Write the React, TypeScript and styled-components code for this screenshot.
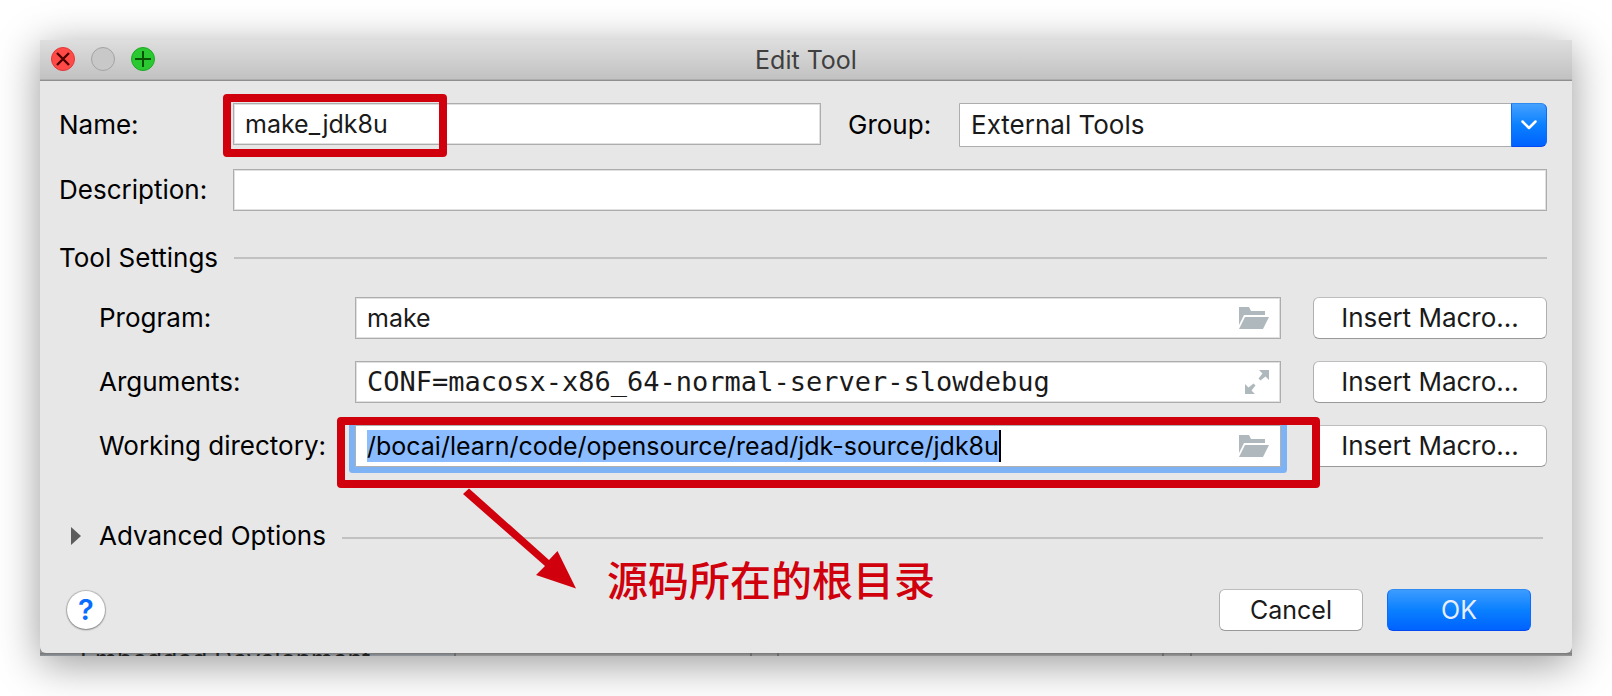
import React from 'react';
import styled, { createGlobalStyle, css } from 'styled-components';

const GlobalStyle = createGlobalStyle`
  *, *::before, *::after { box-sizing: border-box; }
  body {
    margin: 0;
    background: #fff;
    overflow: hidden;
    font-family: Inter, "Noto Sans CJK SC", sans-serif;
    font-size: 26px;
    line-height: 32px;
    color: #000;
  }
  button, input, select { font: inherit; color: inherit; margin: 0; }
`;

const Stage = styled.div`
  padding: 40px;
`;

const Frame = styled.div`
  background: #8f8f8f;
  box-shadow: 0 8px 40px rgba(0, 0, 0, 0.4);
`;

const Dialog = styled.form`
  background: #e7e7e7;
  border-radius: 0 0 6px 6px;
`;

const TitleBar = styled.header`
  display: grid;
  grid-template-columns: 1fr auto 1fr;
  align-items: center;
  height: 41px;
  padding: 0 11px;
  background: linear-gradient(#dedede, #c1c1c1);
  border-bottom: 1px solid #8f8f8f;
  box-shadow: inset 0 -1px 0 #adadad;
  color: #3f3f3f;
`;

const Title = styled.h1`
  margin: 0;
  font-size: 25px;
  font-weight: 400;
`;

const Lights = styled.div`
  display: flex;
  gap: 16px;
  padding-bottom: 2px;
`;

const Light = styled.button<{ $fill: string; $edge: string }>`
  display: grid;
  place-items: center;
  width: 24px;
  height: 24px;
  padding: 0;
  border: 1px solid ${(p) => p.$edge};
  border-radius: 50%;
  background: ${(p) => p.$fill};
`;

const Body = styled.div`
  padding: 22px 25px 22px 19px;
`;

const TopGrid = styled.div`
  display: grid;
  grid-template-columns: 174px minmax(0, 588fr) 138px minmax(0, 588fr);
  row-gap: 22px;
  align-items: start;
`;

const Label = styled.label<{ $indent?: boolean }>`
  align-self: center;
  padding-left: ${(p) => (p.$indent ? 27 : 0)}px;
  white-space: nowrap;
`;

const Field = styled.div<{ $focused?: boolean; $wide?: boolean }>`
  position: relative;
  display: flex;
  align-items: center;
  height: 42px;
  padding: 0 11px;
  border: 1px solid #adadad;
  background: #fff;
  box-shadow: inset 0 0 0 1px #e0e0e0;
  color: #1a1a1a;
  font-size: 25px;
  ${(p) => p.$wide && 'grid-column: 2 / -1;'}
  ${(p) =>
    p.$focused &&
    css`
      box-shadow: 0 0 0 6px #7db3f5;
      border-color: #b0b0b0;
      border-radius: 1px;
    `}
`;

const TextInput = styled.input<{ $mono?: boolean }>`
  flex: 1;
  min-width: 0;
  height: 32px;
  padding: 0;
  border: 0;
  outline: 0;
  background: transparent;
  ${(p) => p.$mono && 'font-family: "DejaVu Sans Mono", monospace; font-size: 27px;'}
`;

const PathSlot = styled.div`
  display: flex;
  flex: 1;
  min-width: 0;
`;

const SelectedInput = styled.input`
  field-sizing: content;
  height: 32px;
  padding: 0;
  border: 0;
  border-right: 2px solid #000;
  outline: 0;
  background: #8abcff;
  color: #000;
`;

const Combo = styled.div`
  position: relative;
  height: 44px;
`;

const Select = styled.select`
  appearance: none;
  width: 100%;
  height: 44px;
  padding: 0 48px 0 11px;
  border: 1px solid #adadad;
  border-radius: 0 6px 6px 0;
  background: #fff;
  color: #1a1a1a;
`;

const ComboArrow = styled.span`
  position: absolute;
  inset: 0 0 0 auto;
  display: grid;
  place-items: center;
  width: 36px;
  border: 1px solid;
  border-color: #2f8bf0 #0a6cff #0448f0;
  border-radius: 0 6px 6px 0;
  background: linear-gradient(#45a1ff, #0a80ff 50%, #0062ff);
  pointer-events: none;
`;

const Section = styled.div<{ $advanced?: boolean }>`
  display: flex;
  align-items: center;
  gap: 16px;
  margin-top: ${(p) => (p.$advanced ? 53 : 31)}px;
  padding-right: ${(p) => (p.$advanced ? 4 : 0)}px;
`;

const Heading = styled.h2`
  margin: 0;
  font-size: 26px;
  font-weight: 400;
  white-space: nowrap;
`;

const Rule = styled.hr<{ $low?: boolean }>`
  flex: 1;
  height: 2px;
  margin: ${(p) => (p.$low ? 4 : 0)}px 0 0;
  border: 0;
  background: #c1c1c1;
`;

const Disclosure = styled.button`
  display: flex;
  align-items: center;
  gap: 18px;
  padding: 0 0 0 12px;
  border: 0;
  background: none;
  line-height: 32px;
  white-space: nowrap;
`;

const Settings = styled.div`
  display: grid;
  grid-template-columns: 283px minmax(0, 1fr) 234px;
  row-gap: 22px;
  margin-top: 23px;
  padding-left: 13px;
`;

const FieldCell = styled.div`
  position: relative;
  margin-right: 32px;
`;

const Button = styled.button<{ $primary?: boolean; $dialog?: boolean }>`
  width: ${(p) => (p.$dialog ? '144px' : 'auto')};
  height: 42px;
  padding: 0;
  border: 1px solid;
  border-radius: 6px;
  font-size: ${(p) => (p.$dialog ? 25 : 26)}px;
  white-space: nowrap;
  ${(p) =>
    p.$primary
      ? css`
          border-color: #2f8bf0 #0a6cff #0448f0;
          background: linear-gradient(#3d9cff, #0a80ff 50%, #0062ff);
          color: #e8eefc;
        `
      : css`
          border-color: #bdbdbd #b0b0b0 #999;
          background: #fff;
          color: #1a1a1a;
        `}
`;

const Footer = styled.footer`
  display: flex;
  align-items: center;
  gap: 24px;
  margin-top: 37px;
  padding: 0 16px 0 8px;
`;

const Help = styled.button`
  width: 38px;
  height: 38px;
  margin-right: auto;
  padding: 0;
  border: 0;
  border-radius: 50%;
  background: #fff;
  box-shadow: 0 0 1px 1px rgba(0, 0, 0, 0.2), 0 1px 2px rgba(0, 0, 0, 0.3);
  color: #0a6cff;
  font-size: 29px;
  font-weight: 600;
`;

const Outline = styled.span<{ $inset: string }>`
  position: absolute;
  z-index: 2;
  inset: ${(p) => p.$inset};
  border: 8px solid #d0000d;
  border-radius: 4px;
  pointer-events: none;
`;

const NameOutline = styled(Outline)`
  width: 224px;
`;

const Note = styled.div`
  position: absolute;
  z-index: 2;
  top: 62px;
  left: 106px;
  display: flex;
  align-items: flex-start;
  gap: 30px;
  color: #d0000d;
  white-space: nowrap;
  pointer-events: none;
`;

const NoteText = styled.span`
  padding-top: 63px;
  font-family: "Noto Sans CJK SC", sans-serif;
  font-size: 41px;
  font-weight: 500;
  line-height: 56px;
`;

const Behind = styled.div`
  display: flex;
  height: 3px;
  overflow: hidden;
`;

const Pane = styled.div<{ $share: number; $tone?: string }>`
  flex: ${(p) => p.$share} 0 0;
  min-width: 0;
  border-right: 2px solid #6a6a6a;
  background: linear-gradient(#777, ${(p) => p.$tone ?? '#999'});
  color: #222;
  white-space: nowrap;

  &:last-child { border-right: 0; }
`;

const PaneText = styled.div`
  margin-top: -10px;
  padding-left: 40px;
  font-size: 25px;
`;

const FolderIcon = () => (
  <svg width="30" height="22" viewBox="0 0 30 22" fill="#afb9bd" aria-hidden="true">
    <path d="M0 0h10l2 4h14v4H5L0 18z" />
    <path d="M6 10h24l-6 12H0z" />
  </svg>
);

const ExpandIcon = () => (
  <svg width="24" height="24" viewBox="0 0 24 24" fill="#afb9bd" aria-hidden="true">
    <path d="M14 0h10v10l-3.500-3.500-5 4-2-2 4-5z" />
    <path d="M0 14l3.500 3.500 5-4 2 2-4 5L10 24H0z" />
  </svg>
);

export default function App() {
  return (
    <>
      <GlobalStyle />
      <Stage>
        <Frame>
          <Dialog onSubmit={(e) => e.preventDefault()}>
            <TitleBar>
              <Lights>
                <Light type="button" aria-label="Close" $fill="#ff4a48" $edge="#e0383a">
                  <svg width="14" height="14" viewBox="0 0 14 14" stroke="#4d0000" strokeWidth="2.400">
                    <path d="M1 1l12 12M13 1L1 13" />
                  </svg>
                </Light>
                <Light type="button" aria-label="Minimize" disabled $fill="#c8c8c8" $edge="#a3a3a3" />
                <Light type="button" aria-label="Zoom" $fill="#2bc931" $edge="#1fa825">
                  <svg width="16" height="16" viewBox="0 0 16 16" stroke="#0a5200" strokeWidth="2">
                    <path d="M8 0v16M0 8h16" />
                  </svg>
                </Light>
              </Lights>
              <Title>Edit Tool</Title>
            </TitleBar>

            <Body>
              <TopGrid>
                <Label htmlFor="name">Name:</Label>
                <Field>
                  <TextInput id="name" defaultValue="make_jdk8u" />
                  <NameOutline $inset="-10px auto -13px -11px" />
                </Field>
                <Label htmlFor="group" $indent>Group:</Label>
                <Combo>
                  <Select id="group" defaultValue="External Tools">
                    <option>External Tools</option>
                  </Select>
                  <ComboArrow>
                    <svg width="16" height="10" viewBox="0 0 16 10" fill="none" stroke="#fff" strokeWidth="2.500" strokeLinecap="round" strokeLinejoin="round">
                      <path d="M1.500 1.500L8 8l6.500-6.500" />
                    </svg>
                  </ComboArrow>
                </Combo>
                <Label htmlFor="description">Description:</Label>
                <Field $wide>
                  <TextInput id="description" />
                </Field>
              </TopGrid>

              <Section>
                <Heading>Tool Settings</Heading>
                <Rule />
              </Section>

              <Settings>
                <Label htmlFor="program" $indent>Program:</Label>
                <FieldCell>
                  <Field>
                    <TextInput id="program" defaultValue="make" />
                    <FolderIcon />
                  </Field>
                </FieldCell>
                <Button type="button">Insert Macro...</Button>

                <Label htmlFor="arguments" $indent>Arguments:</Label>
                <FieldCell>
                  <Field>
                    <TextInput id="arguments" $mono defaultValue="CONF=macosx-x86_64-normal-server-slowdebug" />
                    <ExpandIcon />
                  </Field>
                </FieldCell>
                <Button type="button">Insert Macro...</Button>

                <Label htmlFor="directory" $indent>Working directory:</Label>
                <FieldCell>
                  <Field $focused>
                    <PathSlot>
                      <SelectedInput id="directory" defaultValue="/bocai/learn/code/opensource/read/jdk-source/jdk8u" />
                    </PathSlot>
                    <FolderIcon />
                  </Field>
                  <Outline $inset="-8px -39px -21px -18px" />
                  <Note>
                    <svg width="116" height="102" viewBox="0 0 116 102" fill="currentColor" aria-hidden="true">
                      <path d="M2 7L8 1.500 88 73l8.500-9 18.500 37.500L75 88l9-9z" />
                    </svg>
                    <NoteText>源码所在的根目录</NoteText>
                  </Note>
                </FieldCell>
                <Button type="button">Insert Macro...</Button>
              </Settings>

              <Section $advanced>
                <Disclosure type="button" aria-expanded="false">
                  <svg width="10" height="18" viewBox="0 0 10 18" fill="#5c5c5c" aria-hidden="true">
                    <path d="M0 0l10 9-10 9z" />
                  </svg>
                  Advanced Options
                </Disclosure>
                <Rule $low />
              </Section>

              <Footer>
                <Help type="button" aria-label="Help">?</Help>
                <Button type="button" $dialog>Cancel</Button>
                <Button type="submit" $dialog $primary>OK</Button>
              </Footer>
            </Body>
          </Dialog>
          <Behind>
            <Pane $share={417} $tone="#8f969c">
              <PaneText>Embedded Development</PaneText>
            </Pane>
            <Pane $share={296} />
            <Pane $share={25} />
            <Pane $share={385} />
            <Pane $share={26} />
            <Pane $share={383} />
          </Behind>
        </Frame>
      </Stage>
    </>
  );
}
